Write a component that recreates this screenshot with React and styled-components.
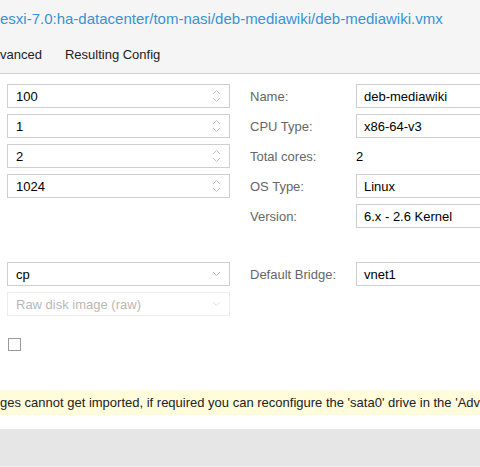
import React from 'react';
import styled, { createGlobalStyle } from 'styled-components';

const Global = createGlobalStyle`
  html, body {
    margin: 0;
    padding: 0;
    width: 480px;
    height: 467px;
    overflow: hidden;
    background: #ffffff;
    font-family: "Liberation Sans", Arial, Helvetica, sans-serif;
    font-size: 13px;
    color: #000;
  }
`;

const Window = styled.div`
  width: 480px;
  height: 467px;
  display: flex;
  flex-direction: column;
  overflow: hidden;
`;

const Header = styled.div`
  background: #f5f5f5;
  border-bottom: 1px solid #d0d0d0;
  height: 73px;
  display: flex;
  flex-direction: column;
`;

const Title = styled.div`
  color: #3892d4;
  font-size: 15px;
  white-space: nowrap;
  height: 38px;
  line-height: 38px;
`;

const Tabs = styled.div`
  display: flex;
  height: 33px;
  align-items: center;
  white-space: nowrap;
`;

const Tab = styled.div`
  color: #222;
  padding-right: 23px;
`;

const Body = styled.div`
  flex: 1;
  display: flex;
  flex-direction: column;
  padding-top: 10px;
`;

const Columns = styled.div`
  display: grid;
  grid-template-columns: 223px 1fr;
  column-gap: 20px;
  padding-left: 7px;
`;

const Stack = styled.div`
  display: flex;
  flex-direction: column;
  gap: 6px;
`;

const Field = styled.div`
  box-sizing: border-box;
  height: 24px;
  border: 1px solid ${p => (p.disabled ? '#ececec' : '#cfcfcf')};
  background: #fff;
  display: flex;
  align-items: center;
  padding: 0 8px;
  color: ${p => (p.disabled ? '#b8b8b8' : '#000')};
  white-space: nowrap;
  overflow: hidden;
`;

const Value = styled.span`
  flex: 1;
`;

const Row = styled.div`
  display: flex;
  align-items: center;
  height: 24px;
`;

const Label = styled.div`
  width: 106px;
  flex: none;
  color: #666;
`;

const RightField = styled(Field)`
  width: 140px;
  flex: none;
  padding-left: 7px;
`;

const Plain = styled.div`
  color: #000;
`;

const Spacer = styled.div`
  height: ${p => p.h}px;
`;

const Check = styled.div`
  box-sizing: border-box;
  width: 13px;
  height: 13px;
  border: 1px solid #9a9a9a;
  margin-left: 8px;
`;

const Warning = styled.div`
  background: #fffcdb;
  height: 25px;
  line-height: 26px;
  white-space: nowrap;
  overflow: hidden;
  color: #222;
  margin-top: 39px;
`;

const Footer = styled.div`
  background: #e6e6e6;
  height: 37px;
  margin-top: 14px;
  border-bottom: 1px solid #f0f0f0;
`;

const Spinner = () => (
  <svg width="9" height="14" viewBox="0 0 9 14" fill="none" stroke="#c2c2c2" strokeWidth="1">
    <path d="M1 5 L4.5 1.5 L8 5" />
    <path d="M1 9 L4.5 12.5 L8 9" />
  </svg>
);

const Chevron = ({ color = '#bdbdbd' }) => (
  <svg width="9" height="6" viewBox="0 0 9 6" fill="none" stroke={color} strokeWidth="1">
    <path d="M1 1 L4.5 4.5 L8 1" />
  </svg>
);

const NumberField = ({ value }) => (
  <Field>
    <Value>{value}</Value>
    <Spinner />
  </Field>
);

const SelectField = ({ value, disabled }) => (
  <Field disabled={disabled}>
    <Value>{value}</Value>
    <Chevron color={disabled ? '#e0e0e0' : '#bdbdbd'} />
  </Field>
);

export default function App() {
  return (
    <Window>
      <Global />
      <Header>
        <Title>esxi-7.0:ha-datacenter/tom-nasi/deb-mediawiki/deb-mediawiki.vmx</Title>
        <Tabs>
          <Tab>vanced</Tab>
          <Tab>Resulting Config</Tab>
        </Tabs>
      </Header>
      <Body>
        <Columns>
          <Stack>
            <NumberField value="100" />
            <NumberField value="1" />
            <NumberField value="2" />
            <NumberField value="1024" />
          </Stack>
          <Stack>
            <Row>
              <Label>Name:</Label>
              <RightField>deb-mediawiki</RightField>
            </Row>
            <Row>
              <Label>CPU Type:</Label>
              <RightField>x86-64-v3</RightField>
            </Row>
            <Row>
              <Label>Total cores:</Label>
              <Plain>2</Plain>
            </Row>
            <Row>
              <Label>OS Type:</Label>
              <RightField>Linux</RightField>
            </Row>
            <Row>
              <Label>Version:</Label>
              <RightField>6.x - 2.6 Kernel</RightField>
            </Row>
          </Stack>
        </Columns>
        <Spacer h={34} />
        <Columns>
          <Stack>
            <SelectField value="cp" />
            <SelectField value="Raw disk image (raw)" disabled />
          </Stack>
          <Stack>
            <Row>
              <Label>Default Bridge:</Label>
              <RightField>vnet1</RightField>
            </Row>
          </Stack>
        </Columns>
        <Spacer h={22} />
        <Check />
        <Warning>ges cannot get imported, if required you can reconfigure the 'sata0' drive in the 'Advanced' tab.</Warning>
        <Footer />
      </Body>
    </Window>
  );
}
